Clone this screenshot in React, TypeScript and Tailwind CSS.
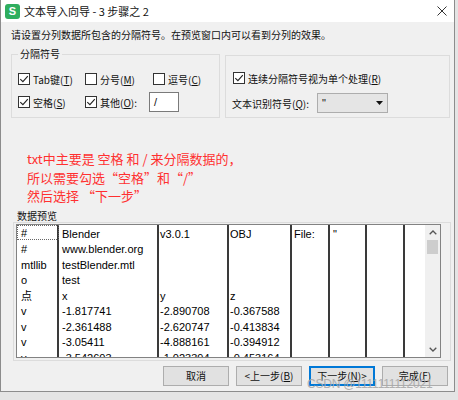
import React from "react";

function Check({ checked }: { checked: boolean }) {
  return (
    <span className="w-[12px] h-[12px] border border-[#333333] bg-white flex items-center justify-center shrink-0">
      {checked && (
        <svg width="10" height="10" viewBox="0 0 10 10">
          <path d="M1.3 5.1 L3.9 7.7 L8.8 2.1" fill="none" stroke="#222" strokeWidth="1.1" />
        </svg>
      )}
    </span>
  );
}

const rows: string[][] = [
  ["#", "Blender", "v3.0.1", "OBJ", "File:", "\"", ""],
  ["#", "www.blender.org", "", "", "", "", ""],
  ["mtllib", "testBlender.mtl", "", "", "", "", ""],
  ["o", "test", "", "", "", "", ""],
  ["点", "x", "y", "z", "", "", ""],
  ["v", "-1.817741", "-2.890708", "-0.367588", "", "", ""],
  ["v", "-2.361488", "-2.620747", "-0.413834", "", "", ""],
  ["v", "-3.05411", "-4.888161", "-0.394912", "", "", ""],
  ["v", "-3.542603", "-1.023394", "-0.453164", "", "", ""],
];

export default function App() {
  return (
    <div className="w-[458px] h-[400px] bg-[#e4e4e4] relative overflow-hidden font-['Noto_Sans_CJK_SC',sans-serif] text-[#111]">
      <div className="w-[455px] h-[392px] border-l border-r border-b border-[#8c8c8c] bg-[#f0f0f0] flex flex-col">
        {/* title bar */}
        <div className="h-[22px] bg-white flex items-center shrink-0">
          <div className="ml-[4px] w-[15px] h-[15px] rounded-[3px] bg-[#2fae5f] flex items-center justify-center text-white text-[11px] font-bold leading-none font-['Liberation_Sans',sans-serif]">
            S
          </div>
          <span className="ml-[4px] text-[11px] leading-[14px] text-[#111]">文本导入向导 - 3 步骤之 2</span>
          <svg className="ml-auto mr-[7px]" width="10" height="10" viewBox="0 0 10 10">
            <path d="M0.5 0.5 L9.5 9.5 M9.5 0.5 L0.5 9.5" stroke="#333" strokeWidth="1" />
          </svg>
        </div>

        <div className="flex flex-col pl-[9px] pr-[4px]">
          <div className="mt-[5px] h-[16px] leading-[16px] text-[10px] pl-[1px]">
            请设置分列数据所包含的分隔符号。在预览窗口内可以看到分列的效果。
          </div>

          <div className="mt-[4px] flex items-start">
            <fieldset className="w-[209px] h-[71px] border border-[#dcdcdc] ml-[1px]">
              <legend className="ml-[6px] px-[2px] text-[10px] leading-[14px]">分隔符号</legend>
              <div className="pt-[10px] pl-[6px] text-[10px]">
                <div className="flex items-center h-[16px]">
                  <div className="w-[67px] flex items-center gap-[3px]">
                    <Check checked />
                    <span>
                      Tab键(<u>T</u>)
                    </span>
                  </div>
                  <div className="w-[68px] flex items-center gap-[3px]">
                    <Check checked={false} />
                    <span>
                      分号(<u>M</u>)
                    </span>
                  </div>
                  <div className="flex items-center gap-[3px]">
                    <Check checked={false} />
                    <span>
                      逗号(<u>C</u>)
                    </span>
                  </div>
                </div>
                <div className="flex items-center h-[20px] mt-[5px]">
                  <div className="w-[67px] flex items-center gap-[3px]">
                    <Check checked />
                    <span>
                      空格(<u>S</u>)
                    </span>
                  </div>
                  <div className="w-[64px] flex items-center gap-[3px]">
                    <Check checked />
                    <span>
                      其他(<u>O</u>):
                    </span>
                  </div>
                  <div className="w-[30px] h-[20px] border border-[#7a7a7a] bg-white pl-[4px] text-[11px] leading-[18px] font-['Liberation_Sans',sans-serif]">
                    /
                  </div>
                </div>
              </div>
            </fieldset>

            <div className="ml-[5px] mt-[8px] w-[225px] h-[63px] border border-[#dcdcdc] pl-[6px] pt-[14px] text-[10px]">
              <div className="flex items-center h-[16px] gap-[3px] pl-[1px]">
                <Check checked />
                <span>
                  连续分隔符号视为单个处理(<u>R</u>)
                </span>
              </div>
              <div className="flex items-center h-[20px] mt-[7px]">
                <span className="w-[85px]">
                  文本识别符号(<u>Q</u>):
                </span>
                <div className="w-[71px] h-[20px] bg-[#e5e5e5] border border-[#adadad] flex items-center justify-between pl-[4px] pr-[4px]">
                  <span className="text-[11px] leading-none font-['Liberation_Sans',sans-serif]">"</span>
                  <svg width="7" height="4" viewBox="0 0 7 4">
                    <path d="M0 0 L7 0 L3.5 4 Z" fill="#111" />
                  </svg>
                </div>
              </div>
            </div>
          </div>

          <div className="mt-[32px] pl-[17px] text-[13px] leading-[18.5px] text-[#ff3030]">
            <div>txt中主要是 空格 和 / 来分隔数据的，</div>
            <div>所以需要勾选“空格”和“/”</div>
            <div>然后选择 “下一步”</div>
          </div>

          <div className="mt-[4px] h-[12px] leading-[12px] text-[10px] pl-[7px]">数据预览</div>

          <div className="ml-[3px] w-[438px] h-[139px] border border-[#dcdcdc] pl-[2px] pt-[1px]">
            <div className="w-[425px] h-[134px] border border-[#828282] bg-white flex">
              <div className="flex-1 overflow-hidden font-['Liberation_Sans','Noto_Sans_CJK_SC',sans-serif] text-[11px] text-black">
                {rows.map((r, i) => (
                  <div key={i} className="flex h-[15.5px]">
                    <div
                      className={
                        i === 0
                          ? "w-[42px] shrink-0 border-r-2 border-[#3a3a3a] pl-[4px] leading-[17px] outline outline-1 outline-dotted outline-[#666] -outline-offset-1"
                          : "w-[42px] shrink-0 border-r-2 border-[#3a3a3a] pl-[4px] leading-[18px]"
                      }
                    >
                      {r[0]}
                    </div>
                    <div className="w-[100px] shrink-0 border-r-2 border-[#3a3a3a] pl-[3px] leading-[18px]">{r[1]}</div>
                    <div className="w-[70px] shrink-0 border-r-2 border-[#3a3a3a] pl-[1px] leading-[18px]">{r[2]}</div>
                    <div className="w-[63px] shrink-0 border-r-2 border-[#3a3a3a] pl-[1px] leading-[18px]">{r[3]}</div>
                    <div className="w-[38px] shrink-0 border-r-2 border-[#3a3a3a] pl-[2px] leading-[18px]">{r[4]}</div>
                    <div className="w-[37px] shrink-0 border-r-2 border-[#3a3a3a] pl-[3px] leading-[18px]">{r[5]}</div>
                    <div className="w-[38px] shrink-0 border-r-2 border-[#3a3a3a] leading-[18px]">{r[6]}</div>
                  </div>
                ))}
              </div>
              <div className="w-[15px] bg-[#f0f0f0] flex flex-col items-center shrink-0">
                <div className="h-[15px] flex items-center justify-center">
                  <svg width="8" height="5" viewBox="0 0 8 5">
                    <path d="M0.7 4.3 L4 1 L7.3 4.3" fill="none" stroke="#555" strokeWidth="1.3" />
                  </svg>
                </div>
                <div className="w-[11px] h-[14px] bg-[#cdcdcd]" />
                <div className="flex-1" />
                <div className="h-[15px] flex items-center justify-center">
                  <svg width="8" height="5" viewBox="0 0 8 5">
                    <path d="M0.7 0.7 L4 4 L7.3 0.7" fill="none" stroke="#555" strokeWidth="1.3" />
                  </svg>
                </div>
              </div>
            </div>
          </div>

          <div className="mt-[5px] flex justify-end gap-[7px] pr-[2px] text-[10px]">
            <div className="w-[66px] h-[20px] bg-[#e1e1e1] border border-[#adadad] flex items-center justify-center">取消</div>
            <div className="w-[66px] h-[20px] bg-[#e1e1e1] border border-[#adadad] flex items-center justify-center">
              &lt;上一步(<u>B</u>)
            </div>
            <div className="w-[66px] h-[20px] bg-[#e1e1e1] border-2 border-[#0078d7] flex items-center justify-center">
              下一步(<u>N</u>)&gt;
            </div>
            <div className="w-[66px] h-[20px] bg-[#e1e1e1] border border-[#adadad] flex items-center justify-center">
              完成(<u>F</u>)
            </div>
          </div>
        </div>
      </div>

      <div className="absolute left-[307px] top-[376px] text-[12px] tracking-[-0.2px] leading-[16px] text-[#a8a8a8] opacity-90 font-['Liberation_Sans',sans-serif] whitespace-nowrap">
        CSDN @1111111112021
      </div>
    </div>
  );
}
